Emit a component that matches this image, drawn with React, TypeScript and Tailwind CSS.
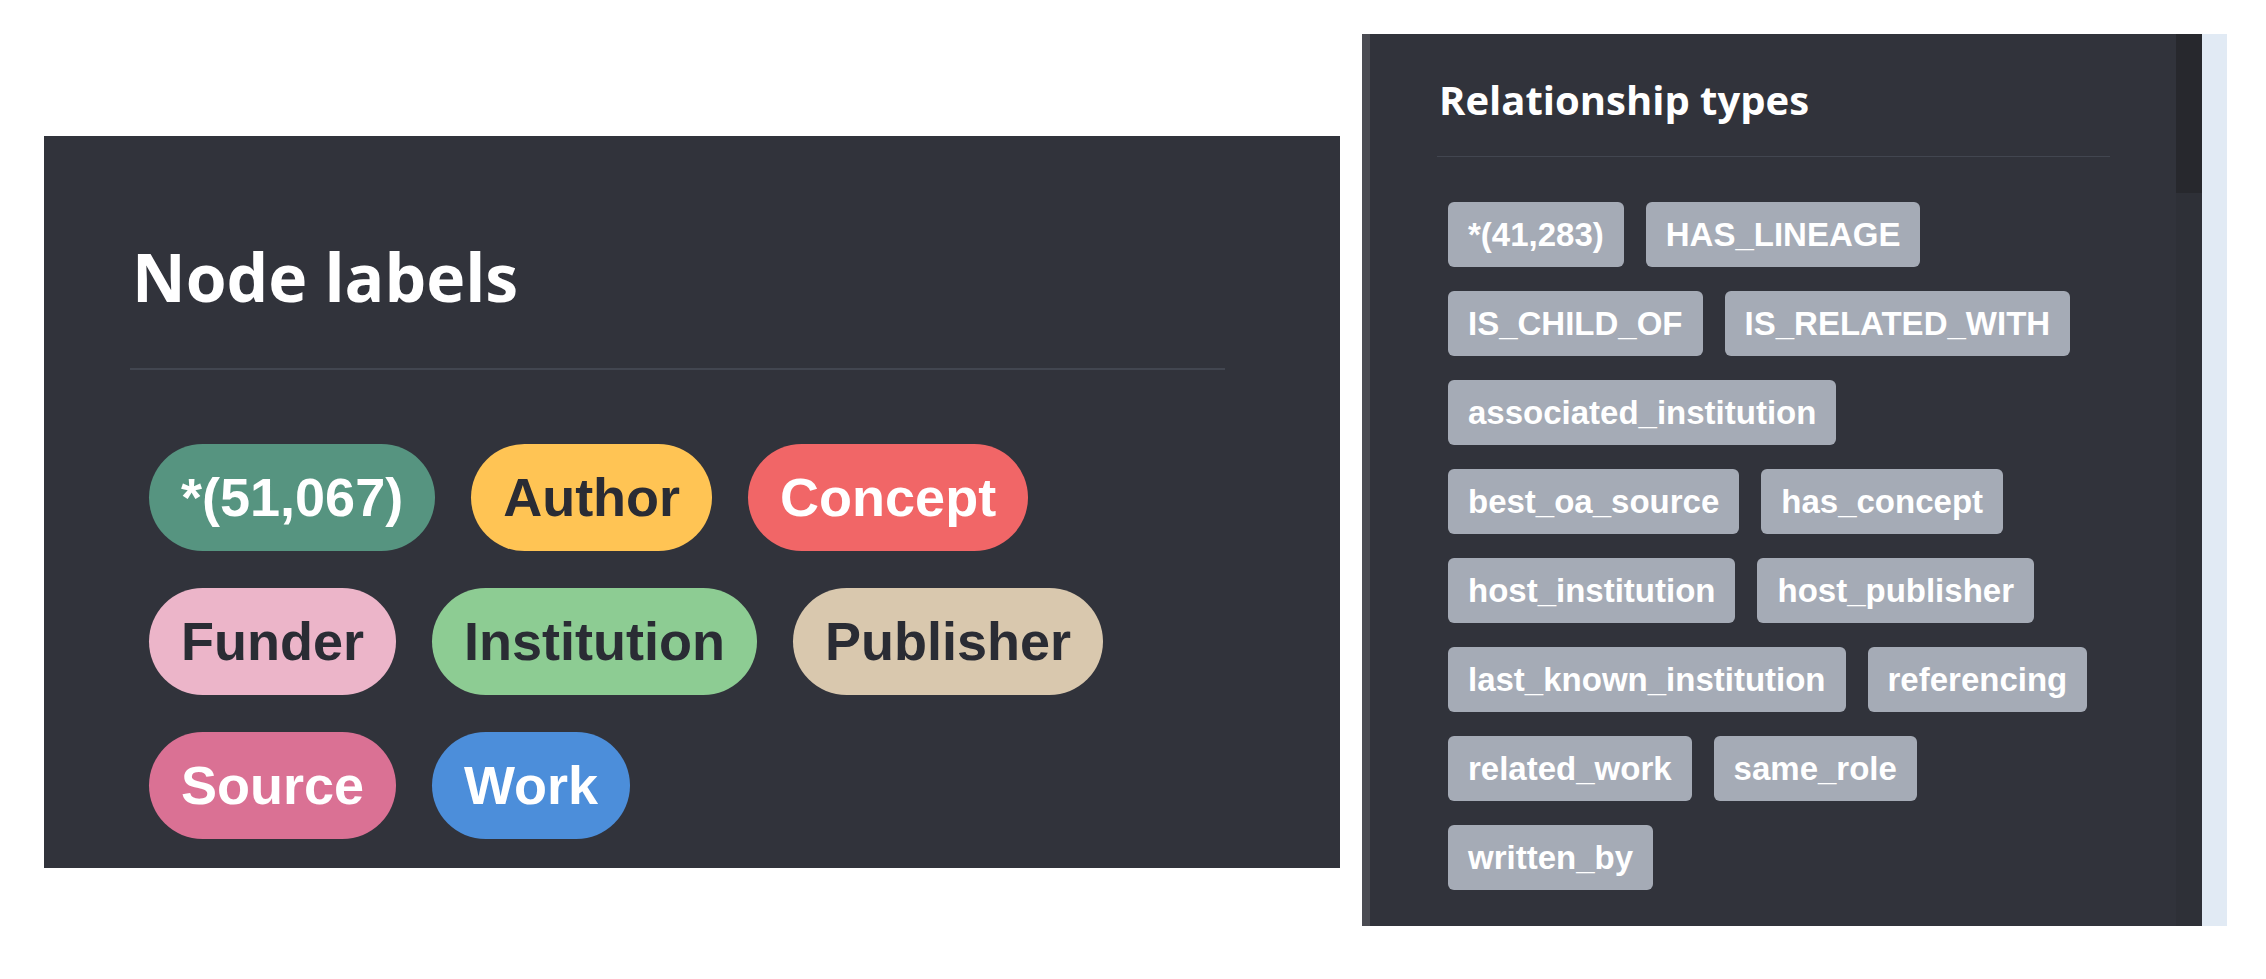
const nodeLabels = [
  { name: "*(51,067)", bg: "bg-[#569480]", text: "text-white" },
  { name: "Author", bg: "bg-[#ffc454]", text: "text-[#2a2c34]" },
  { name: "Concept", bg: "bg-[#f16667]", text: "text-white" },
  { name: "Funder", bg: "bg-[#ecb5c9]", text: "text-[#2a2c34]" },
  { name: "Institution", bg: "bg-[#8dcc93]", text: "text-[#2a2c34]" },
  { name: "Publisher", bg: "bg-[#d9c8ae]", text: "text-[#2a2c34]" },
  { name: "Source", bg: "bg-[#da7194]", text: "text-white" },
  { name: "Work", bg: "bg-[#4c8eda]", text: "text-white" },
];

const relTypes = [
  "*(41,283)",
  "HAS_LINEAGE",
  "IS_CHILD_OF",
  "IS_RELATED_WITH",
  "associated_institution",
  "best_oa_source",
  "has_concept",
  "host_institution",
  "host_publisher",
  "last_known_institution",
  "referencing",
  "related_work",
  "same_role",
  "written_by",
];

export default function App() {
  return (
    <div className="flex items-start w-[2266px] h-[979px] bg-white pl-[44px] gap-[22px] overflow-hidden">
      {/* node labels panel */}
      <div className="mt-[136px] w-[1296px] h-[732px] bg-[#31333b] pl-[86px] pt-[107px]">
        <h1 className="text-[66px] leading-[66px] font-bold text-white pl-[2px] font-['Open_Sans',sans-serif]">Node labels</h1>
        <div className="w-[1095px] h-[2px] bg-[#424650] mt-[59px]" />
        <div className="w-[1095px] flex flex-wrap gap-x-[36px] gap-y-[37px] pl-[19px] pt-[74px]">
          {nodeLabels.map((item) => (
            <span
              key={item.name}
              className={`${item.bg} ${item.text} h-[107px] px-[32px] rounded-full flex items-center text-[54px] font-bold font-['Liberation_Sans',Arial,sans-serif]`}
            >
              {item.name}
            </span>
          ))}
        </div>
      </div>

      {/* relationship types panel */}
      <div className="mt-[34px] flex">
        <div className="w-[840px] h-[892px] bg-[#31333b] border-l-[8px] border-[#4a4b52] flex">
          <div className="flex-1 pl-[67px] pt-[46px]">
            <h2 className="text-[40px] leading-[40px] font-bold text-white pl-[2px] font-['Open_Sans',sans-serif]">Relationship types</h2>
            <div className="w-[673px] h-[1px] bg-[#424650] mt-[36px]" />
            <div className="w-[673px] flex flex-wrap gap-x-[22px] gap-y-[24px] pl-[11px] pt-[45px]">
              {relTypes.map((name) => (
                <span
                  key={name}
                  className="bg-[#a5abb6] text-white h-[65px] px-[20px] rounded-[6px] flex items-center text-[33px] font-bold font-['Liberation_Sans',Arial,sans-serif]"
                >
                  {name}
                </span>
              ))}
            </div>
          </div>
          {/* scrollbar */}
          <div className="w-[26px] h-full bg-[#2e3037]">
            <div className="w-full h-[159px] bg-[#27282d]" />
          </div>
        </div>
        <div className="w-[25px] h-[892px] bg-[#e1eaf4]" />
      </div>
    </div>
  );
}
